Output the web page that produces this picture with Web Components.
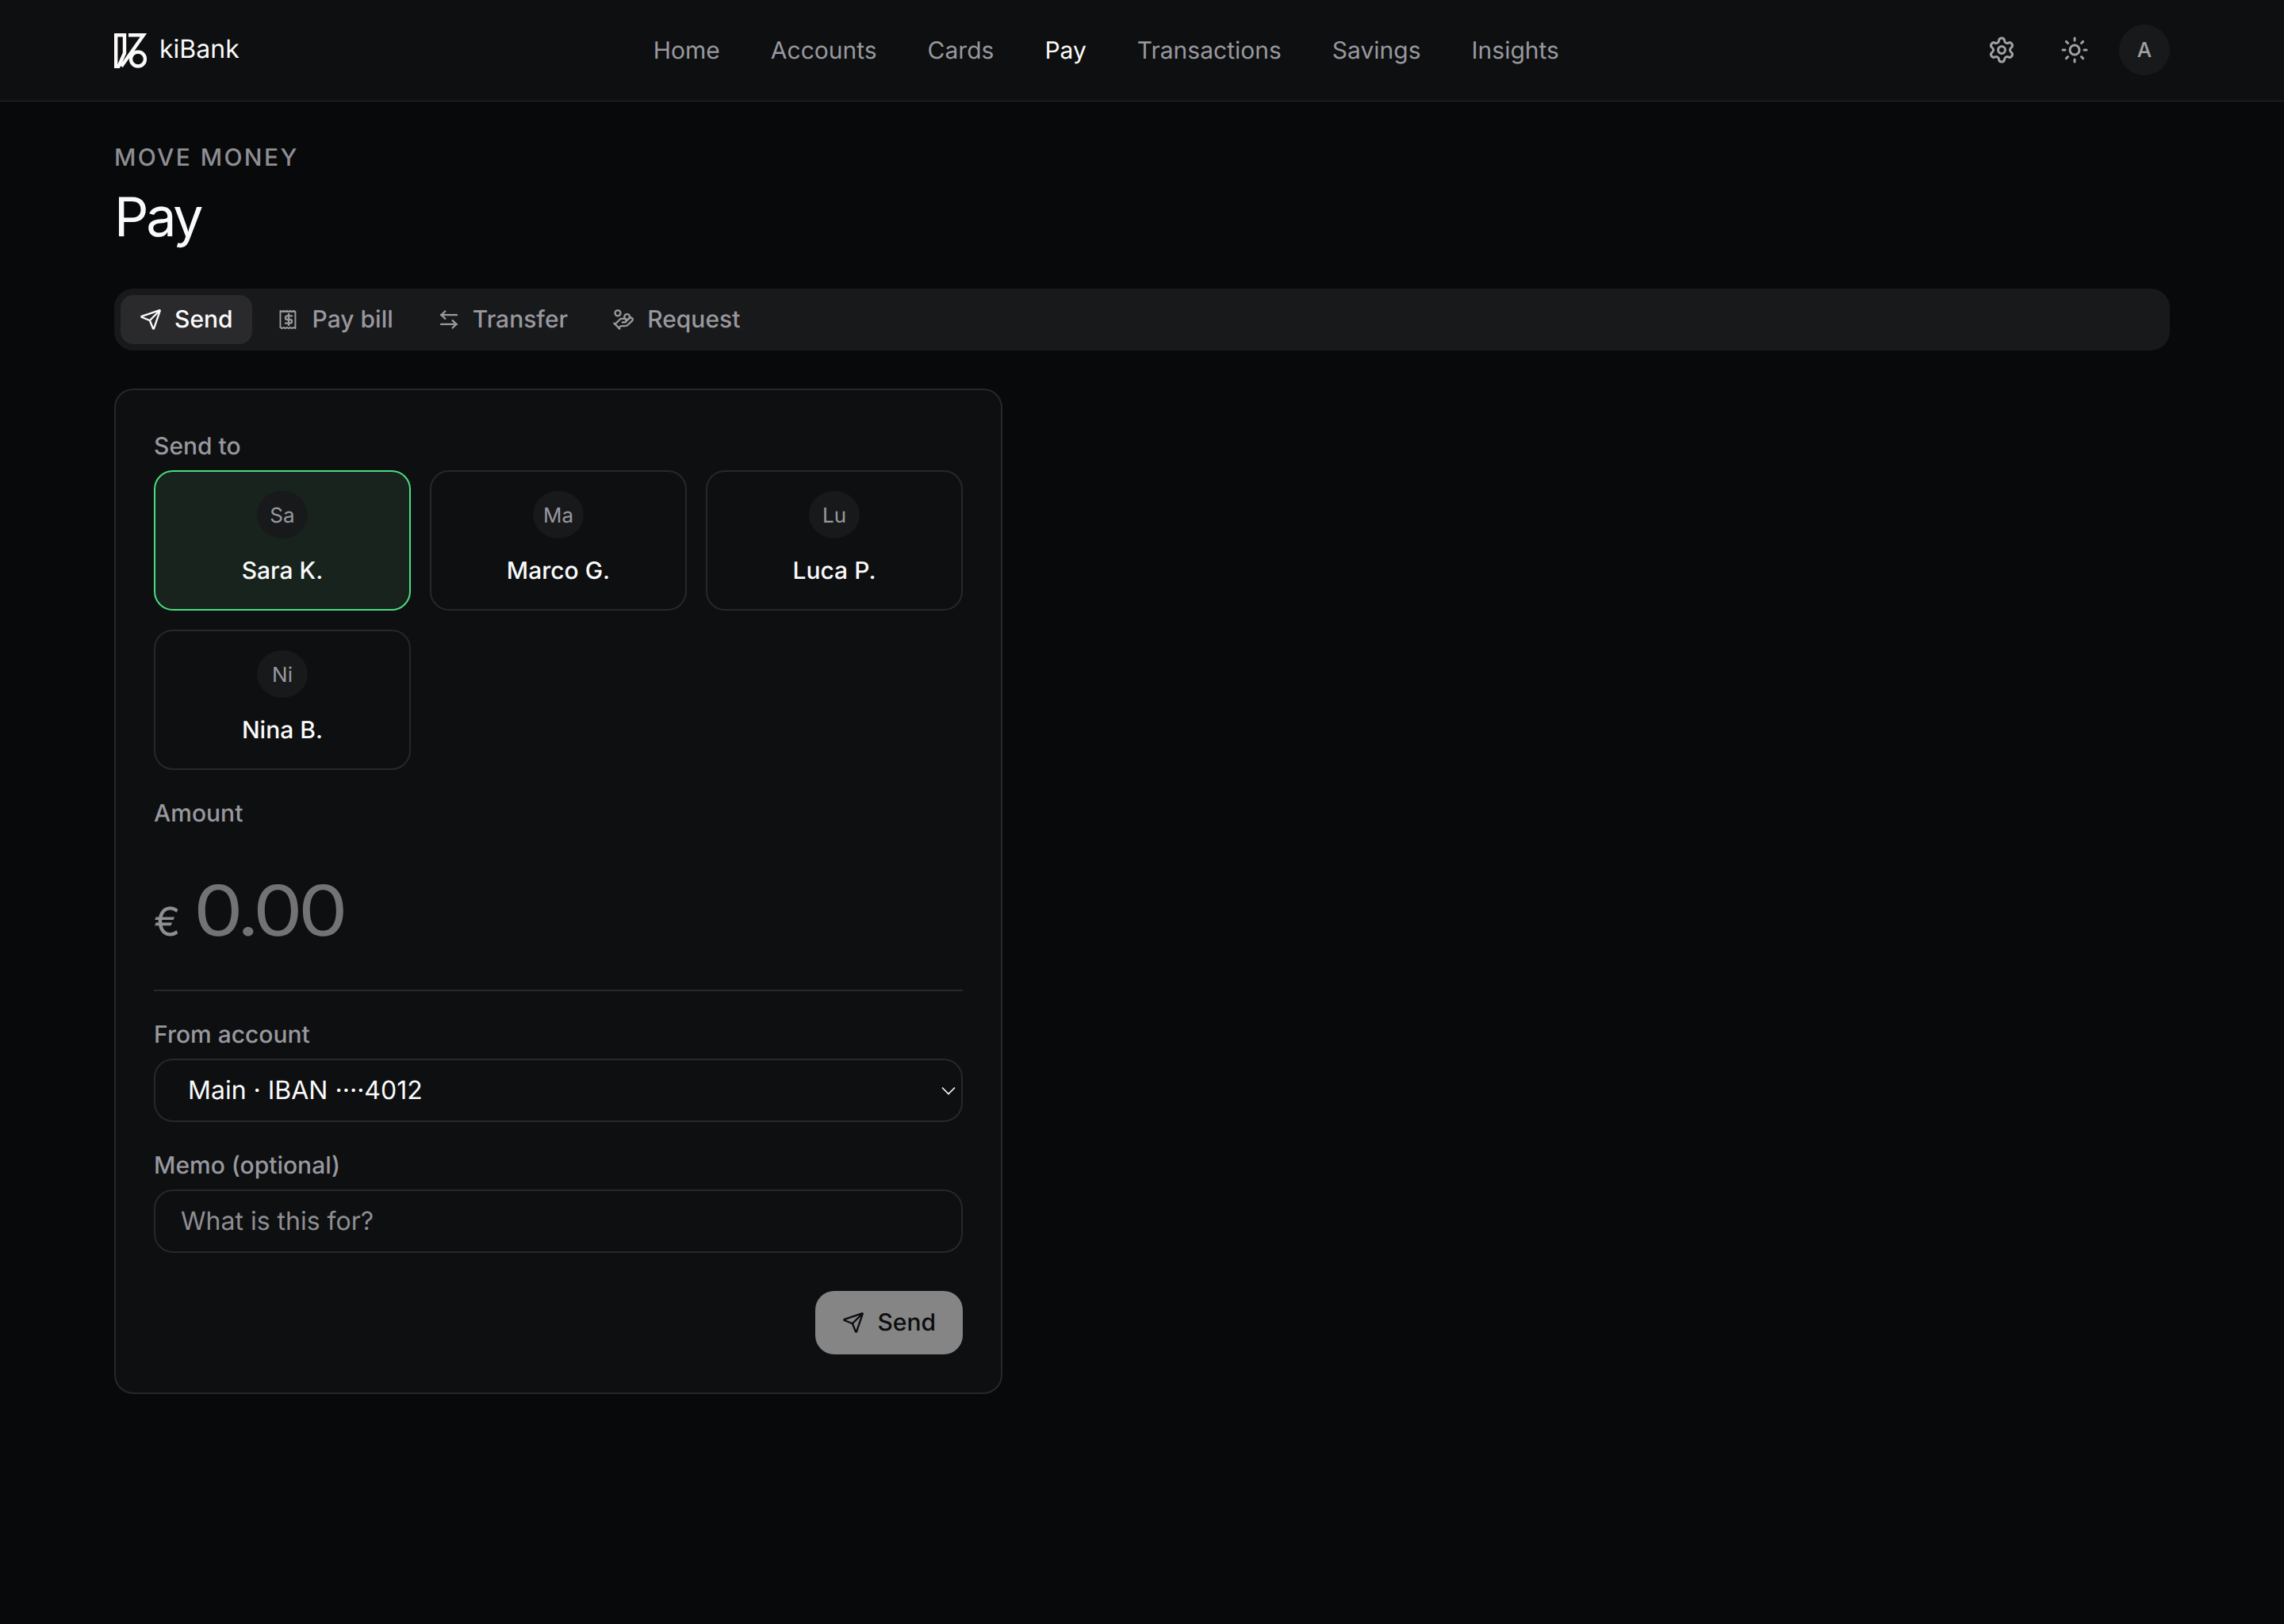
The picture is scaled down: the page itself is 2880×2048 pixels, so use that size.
<!DOCTYPE html>
<html lang="en">
<head>
<meta charset="utf-8">
<title>kiBank Pay</title>
<style>
  html, body { margin: 0; padding: 0; background: #08090b; }
  body { min-height: 2048px; font-family: Inter, "Liberation Sans", sans-serif; color: #fafafa; text-rendering: geometricPrecision; }
</style>
</head>
<body>
<ki-app></ki-app>
<script>
const ICONS = {
  send: '<path d="M14.536 21.686a.5.5 0 0 0 .937-.024l6.5-19a.496.496 0 0 0-.635-.635l-19 6.5a.5.5 0 0 0-.024.937l7.93 3.18a2 2 0 0 1 1.112 1.11z"/><path d="m21.854 2.147-10.94 10.939"/>',
  bill: '<path stroke-width="1.7" d="M3 2.5l1.8 1 1.8-1 1.8 1 1.8-1 1.8 1 1.8-1 1.8 1 1.8-1 1.8 1V21.5l-1.8-1-1.8 1-1.8-1-1.8 1-1.8-1-1.8 1-1.8-1-1.8 1-1.8-1Z"/><path d="M15.5 8h-5a2 2 0 0 0 0 4h3a2 2 0 0 1 0 4h-5"/><path d="M12 6v12"/>',
  transfer: '<path d="M8 3 4 7l4 4"/><path d="M3.5 7h17"/><path d="m16 21 4-4-4-4"/><path d="M20.5 17h-17"/>',
  request: '<path d="M11 15h2a2 2 0 1 0 0-4h-3c-.6 0-1.1.2-1.4.6L3 17"/><path d="m7 21 1.6-1.4c.3-.4.8-.6 1.4-.6h4c1.1 0 2.1-.4 2.8-1.2l4.6-4.4a2 2 0 0 0-2.75-2.91l-4.2 3.9"/><path d="m2 16 6 6"/><circle cx="16" cy="9" r="2.9"/><circle cx="6" cy="5" r="3"/>',
  gear: '<path d="M9.671 4.136a2.34 2.34 0 0 1 4.659 0 2.34 2.34 0 0 0 3.319 1.915 2.34 2.34 0 0 1 2.33 4.033 2.34 2.34 0 0 0 0 3.831 2.34 2.34 0 0 1-2.33 4.033 2.34 2.34 0 0 0-3.319 1.915 2.34 2.34 0 0 1-4.659 0 2.34 2.34 0 0 0-3.32-1.915 2.34 2.34 0 0 1-2.33-4.033 2.34 2.34 0 0 0 0-3.831A2.34 2.34 0 0 1 6.35 6.051a2.34 2.34 0 0 0 3.32-1.915"/><circle cx="12" cy="12" r="3"/>',
  sun: '<circle cx="12" cy="12" r="4"/><path d="M12 2v2"/><path d="M12 20v2"/><path d="m4.93 4.93 1.41 1.41"/><path d="m17.66 17.66 1.41 1.41"/><path d="M2 12h2"/><path d="M20 12h2"/><path d="m6.34 17.66-1.41 1.41"/><path d="m19.07 4.93-1.41 1.41"/>'
};

class KiIcon extends HTMLElement {
  connectedCallback() {
    const size = this.getAttribute('size') || 28;
    const name = this.getAttribute('name');
    if (!this.shadowRoot) this.attachShadow({ mode: 'open' });
    this.shadowRoot.innerHTML = `<style>:host{display:inline-flex;flex:none;width:${size}px;height:${size}px}svg{display:block;width:100%;height:100%}</style>
      <svg viewBox="0 0 24 24" fill="none" stroke="currentColor" stroke-width="2" stroke-linecap="round" stroke-linejoin="round">${ICONS[name]}</svg>`;
  }
}
customElements.define('ki-icon', KiIcon);

class KiLogo extends HTMLElement {
  constructor() {
    super();
    this.attachShadow({ mode: 'open' }).innerHTML = `<style>
      :host{display:flex;align-items:center;gap:16px;font-size:32px;font-weight:400;color:#fafafa;line-height:44px}
      svg{display:block;width:41px;height:44px;flex:none;margin-top:1px}
      span{margin-top:-2px}
    </style>
    <svg viewBox="0 0 41 44" fill="none" stroke="#fafafa" stroke-width="4.4">
      <path d="M2.2 2.2H13V25L5.5 41.8H2.2Z"/>
      <path d="M18 2.2H37L9 41.8"/>
      <circle cx="30" cy="32.5" r="9"/>
    </svg><span>kiBank</span>`;
  }
}
customElements.define('ki-logo', KiLogo);

class KiNavLink extends HTMLElement {
  constructor() {
    super();
    this.attachShadow({ mode: 'open' }).innerHTML = `<style>
      :host{display:block;font-size:30px;line-height:46px;color:#98989f;white-space:nowrap}
      :host([active]){color:#fafafa}
    </style><slot></slot>`;
  }
}
customElements.define('ki-nav-link', KiNavLink);

class KiIconButton extends HTMLElement {
  constructor() {
    super();
    this.attachShadow({ mode: 'open' }).innerHTML = `<style>
      :host{display:flex;align-items:center;justify-content:center;width:72px;height:64px;color:#a1a1a6}
    </style><slot></slot>`;
  }
}
customElements.define('ki-icon-button', KiIconButton);

class KiHeader extends HTMLElement {
  constructor() {
    super();
    this.attachShadow({ mode: 'open' }).innerHTML = `<style>
      :host{display:flex;align-items:center;justify-content:space-between;box-sizing:border-box;height:128px;padding:0 144px 1px;background:#0e0f10;border-bottom:1px solid #27282a}
      nav{display:flex;gap:64px;align-items:center;padding-top:2px}
      .right{display:flex;align-items:center;gap:20px}
      .avatar{width:64px;height:64px;border-radius:50%;background:#18191b;color:#a1a1a6;display:flex;align-items:center;justify-content:center;font-size:26px;font-weight:500}
    </style>
    <ki-logo></ki-logo>
    <nav>
      <ki-nav-link>Home</ki-nav-link><ki-nav-link>Accounts</ki-nav-link><ki-nav-link>Cards</ki-nav-link><ki-nav-link active>Pay</ki-nav-link><ki-nav-link>Transactions</ki-nav-link><ki-nav-link>Savings</ki-nav-link><ki-nav-link>Insights</ki-nav-link>
    </nav>
    <div class="right">
      <ki-icon-button><ki-icon name="gear" size="36"></ki-icon></ki-icon-button>
      <ki-icon-button><ki-icon name="sun" size="36"></ki-icon></ki-icon-button>
      <div class="avatar">A</div>
    </div>`;
  }
}
customElements.define('ki-header', KiHeader);

class KiPageTitle extends HTMLElement {
  constructor() {
    super();
    this.attachShadow({ mode: 'open' }).innerHTML = `<style>
      :host{display:block}
      .eyebrow{font-size:30px;line-height:46px;font-weight:500;letter-spacing:2.4px;color:#8e8e93;text-transform:uppercase}
      h1{margin:10px 0 0;font-size:68px;line-height:84px;font-weight:400;letter-spacing:-3.2px;color:#fafafa}
    </style>
    <div class="eyebrow">Move money</div><h1>Pay</h1>`;
  }
}
customElements.define('ki-page-title', KiPageTitle);

class KiTab extends HTMLElement {
  constructor() {
    super();
    this.attachShadow({ mode: 'open' }).innerHTML = `<style>
      :host{display:flex;align-items:center;gap:16px;height:62px;padding:0 24px;border-radius:16px;font-size:30px;font-weight:500;color:#98989f}
      :host([active]){background:#2a2a2c;color:#fafafa}
    </style><slot name="icon"></slot><slot></slot>`;
  }
}
customElements.define('ki-tab', KiTab);

class KiTabs extends HTMLElement {
  constructor() {
    super();
    this.attachShadow({ mode: 'open' }).innerHTML = `<style>
      :host{display:flex;gap:8px;padding:8px;background:#18191b;border-radius:24px}
    </style><slot></slot>`;
  }
}
customElements.define('ki-tabs', KiTabs);

class KiRecipient extends HTMLElement {
  constructor() {
    super();
    const initials = this.getAttribute('initials');
    this.attachShadow({ mode: 'open' }).innerHTML = `<style>
      :host{display:flex;flex-direction:column;align-items:center;gap:18px;box-sizing:border-box;height:177px;padding:24px 16px;border:2px solid #27282b;border-radius:24px;font-size:30px;line-height:47px;font-weight:500;color:#fafafa}
      :host([selected]){border-color:#4ade80;background:#17231c}
      .av{box-sizing:border-box;width:64px;height:64px;padding-top:3px;border-radius:50%;background:#18191b;color:#98989f;display:flex;align-items:center;justify-content:center;font-size:26px;line-height:1;font-weight:400}
    </style><div class="av">${initials}</div><slot></slot>`;
  }
}
customElements.define('ki-recipient', KiRecipient);

class KiLabel extends HTMLElement {
  constructor() {
    super();
    this.attachShadow({ mode: 'open' }).innerHTML = `<style>
      :host{display:block;font-size:30px;line-height:47px;margin-bottom:-2px;font-weight:500;color:#98989f}
    </style><slot></slot>`;
  }
}
customElements.define('ki-label', KiLabel);

class KiBox extends HTMLElement {
  constructor() {
    super();
    this.attachShadow({ mode: 'open' }).innerHTML = `<style>
      :host{display:flex;align-items:center;justify-content:space-between;box-sizing:border-box;height:80px;padding:0 32px 1px;border:2px solid #27282b;border-radius:24px;font-size:32px;color:#fafafa}
      :host([placeholder]){color:#8e8e93}
    </style><slot></slot><slot name="end"></slot>`;
  }
}
customElements.define('ki-box', KiBox);

class KiButton extends HTMLElement {
  constructor() {
    super();
    this.attachShadow({ mode: 'open' }).innerHTML = `<style>
      :host{display:inline-flex;align-items:center;gap:16px;box-sizing:border-box;height:80px;padding:0 34px;border-radius:24px;background:#858586;color:#0c0d0f;font-size:30px;font-weight:500}
    </style><slot name="icon"></slot><slot></slot>`;
  }
}
customElements.define('ki-button', KiButton);

class KiAmount extends HTMLElement {
  constructor() {
    super();
    this.attachShadow({ mode: 'open' }).innerHTML = `<style>
      :host{display:flex;align-items:baseline;gap:17px;box-sizing:border-box;padding:45px 0 43px;border-bottom:2px solid #27282b}
      .cur{font-size:50px;line-height:48px;color:#8e8e93}
      .val{display:inline-block;font-size:88px;line-height:112px;color:#737375;letter-spacing:-5px;transform:scaleX(1.13);transform-origin:0 50%}
    </style><span class="cur">€</span><span class="val">0.00</span>`;
  }
}
customElements.define('ki-amount', KiAmount);

class KiCard extends HTMLElement {
  constructor() {
    super();
    this.attachShadow({ mode: 'open' }).innerHTML = `<style>
      :host{display:block;box-sizing:border-box;width:1120px;padding:48px;border:2px solid #27282b;border-radius:24px;background:#0e0f11}
      .grid{display:grid;grid-template-columns:repeat(3,1fr);gap:24px;margin-top:8px}
      .amount{margin-top:32px}
      .from{margin-top:32px}
      .from ki-box{margin-top:8px}
      .memo{margin-top:32px}
      .memo ki-box{margin-top:8px}
      .actions{display:flex;justify-content:flex-end;margin-top:48px}
      .sel{padding-left:41px;padding-right:7px}
      svg.chev{display:block;width:18px;height:11px;margin-top:1px}
    </style>
    <ki-label>Send to</ki-label>
    <div class="grid">
      <ki-recipient initials="Sa" selected>Sara K.</ki-recipient>
      <ki-recipient initials="Ma">Marco G.</ki-recipient>
      <ki-recipient initials="Lu">Luca P.</ki-recipient>
      <ki-recipient initials="Ni">Nina B.</ki-recipient>
    </div>
    <div class="amount"><ki-label>Amount</ki-label><ki-amount></ki-amount></div>
    <div class="from">
      <ki-label>From account</ki-label>
      <ki-box class="sel">Main · IBAN ····4012<svg class="chev" slot="end" viewBox="0 0 18 11" fill="none" stroke="#fafafa" stroke-width="1.6"><path d="M1 1.5l8 8 8-8"/></svg></ki-box>
    </div>
    <div class="memo">
      <ki-label>Memo (optional)</ki-label>
      <ki-box placeholder>What is this for?</ki-box>
    </div>
    <div class="actions"><ki-button><ki-icon slot="icon" name="send" size="28"></ki-icon>Send</ki-button></div>`;
  }
}
customElements.define('ki-card', KiCard);

class KiApp extends HTMLElement {
  constructor() {
    super();
    this.attachShadow({ mode: 'open' }).innerHTML = `<style>
      :host{display:block;font-family:Inter,"Liberation Sans",sans-serif}
      main{display:flex;flex-direction:column;padding:48px 144px 0}
      ki-tabs{margin-top:48px}
      ki-card{margin-top:48px}
    </style>
    <ki-header></ki-header>
    <main>
      <ki-page-title></ki-page-title>
      <ki-tabs>
        <ki-tab active><ki-icon slot="icon" name="send"></ki-icon>Send</ki-tab>
        <ki-tab><ki-icon slot="icon" name="bill"></ki-icon>Pay bill</ki-tab>
        <ki-tab><ki-icon slot="icon" name="transfer"></ki-icon>Transfer</ki-tab>
        <ki-tab><ki-icon slot="icon" name="request"></ki-icon>Request</ki-tab>
      </ki-tabs>
      <ki-card></ki-card>
    </main>`;
  }
}
customElements.define('ki-app', KiApp);
</script>
</body>
</html>
